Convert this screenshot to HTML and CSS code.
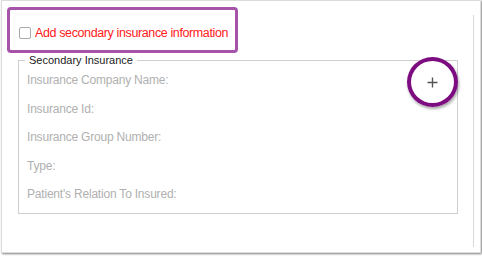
FILE: index.html
```html
<!DOCTYPE html>
<html>
<head>
<meta charset="utf-8">
<link rel="stylesheet" href="styles.css">
</head>
<body>
<div class="card">
  <div class="main">
    <div class="highlight">
      <label class="check">
        <span class="box"></span>
        <span class="check-text">Add secondary insurance information</span>
      </label>
    </div>
    <fieldset class="group">
      <legend>Secondary Insurance</legend>
      <div class="fields">
        <div class="field">Insurance Company Name:</div>
        <div class="field">Insurance Id:</div>
        <div class="field">Insurance Group Number:</div>
        <div class="field">Type:</div>
        <div class="field">Patient's Relation To Insured:</div>
      </div>
      <div class="ring">
        <svg class="plus" width="11" height="11" viewBox="0 0 11 11"><path d="M5.5 0.5v10M0.5 5.5h10" stroke="#555" stroke-width="1.4" fill="none"/></svg>
      </div>
    </fieldset>
  </div>
  <div class="track"></div>
</div>
</body>
</html>
```
FILE: styles.css
```css
html, body {
  margin: 0;
  padding: 0;
  background: #fff;
}
body {
  font-family: "Liberation Sans", Arial, sans-serif;
  width: 482px;
  height: 256px;
  overflow: hidden;
}
.card {
  margin-left: 1px;
  width: 480px;
  height: 253px;
  box-sizing: border-box;
  border: 1px solid #dcdcdc;
  box-shadow: 1px 1px 2px rgba(0, 0, 0, 0.5);
  display: flex;
  background: #fff;
}
.main {
  width: 471px;
  display: flex;
  flex-direction: column;
}
.track {
  width: 1px;
  background: #d8d8d8;
  margin: 14px 0 5px 0;
}
.highlight {
  margin: 6px 0 0 5px;
  width: 231px;
  height: 46px;
  box-sizing: border-box;
  border: 3px solid #a653aa;
  border-radius: 4px;
  padding: 6px 0 0 9px;
  display: flex;
  align-items: center;
}
.check {
  display: flex;
  align-items: center;
}
.box {
  width: 10px;
  height: 10px;
  border: 1px solid #a9a9a9;
  border-radius: 2px;
  background: #fff;
}
.check-text {
  margin-left: 4px;
  color: #ff2020;
  font-size: 12.5px;
  letter-spacing: -0.38px;
}
.group {
  position: relative;
  margin: 1px 0 0 16px;
  width: 440px;
  height: 160px;
  box-sizing: border-box;
  border: 1px solid #cfcfcf;
  padding: 0 0 0 6px;
  min-width: 0;
}
.group legend {
  font-size: 11px;
  line-height: 13px;
  padding: 0 4px;
  color: #222;
}
.fields {
  padding: 0 0 0 2px;
  margin-top: -1px;
}
.field {
  height: 28.6px;
  line-height: 28.6px;
  font-size: 12px;
  letter-spacing: -0.2px;
  color: #b0b0b0;
}
.ring {
  position: absolute;
  top: -10px;
  right: -1px;
  width: 51px;
  height: 50px;
  box-sizing: border-box;
  border: 4px solid #7c0c80;
  border-radius: 50%;
  box-shadow: 1px 2px 3px rgba(0, 0, 0, 0.35);
  display: flex;
  align-items: center;
  justify-content: center;
}
```
